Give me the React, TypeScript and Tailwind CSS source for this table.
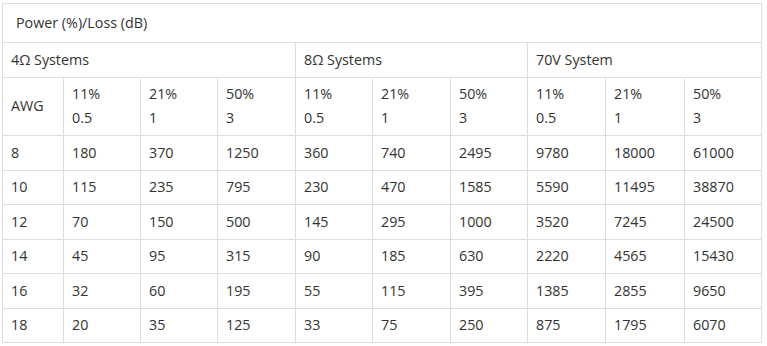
import React from "react";

const rows: string[][] = [
  ["8", "180", "370", "1250", "360", "740", "2495", "9780", "18000", "61000"],
  ["10", "115", "235", "795", "230", "470", "1585", "5590", "11495", "38870"],
  ["12", "70", "150", "500", "145", "295", "1000", "3520", "7245", "24500"],
  ["14", "45", "95", "315", "90", "185", "630", "2220", "4565", "15430"],
  ["16", "32", "60", "195", "55", "115", "395", "1385", "2855", "9650"],
  ["18", "20", "35", "125", "33", "75", "250", "875", "1795", "6070"],
];

const widths = [61, 77, 77, 78, 77, 78, 77, 78, 79, 77];
const sub = [
  ["11%", "0.5"],
  ["21%", "1"],
  ["50%", "3"],
];

const td = "border border-[#dddddd] px-[8px] py-[4.75px] align-middle text-left font-normal";

export default function App() {
  return (
    <div className="min-h-[346px] w-[767px] bg-white pl-[2px] pt-[3px]">
      <table
        className="w-[760px] table-fixed border-collapse text-[14.3px] leading-[24px] text-[#333333]"
        style={{ fontFamily: '"Open Sans", "Noto Sans", sans-serif' }}
      >
        <colgroup>
          {widths.map((w, i) => (
            <col key={i} style={{ width: w }} />
          ))}
        </colgroup>
        <tbody>
          <tr>
            <td colSpan={10} className="border border-[#dddddd] px-[13px] py-[7px]">
              Power (%)/Loss (dB)
            </td>
          </tr>
          <tr>
            <td colSpan={4} className={td}>4Ω Systems</td>
            <td colSpan={3} className={td}>8Ω Systems</td>
            <td colSpan={3} className={td}>70V System</td>
          </tr>
          <tr>
            <td className={td}>AWG</td>
            {[0, 1, 2].flatMap((g) =>
              sub.map(([a, b], i) => (
                <td key={`${g}-${i}`} className={td}>
                  {a}
                  <br />
                  {b}
                </td>
              ))
            )}
          </tr>
          {rows.map((r, ri) => (
            <tr key={ri}>
              {r.map((c, ci) => (
                <td key={ci} className={td}>
                  {c}
                </td>
              ))}
            </tr>
          ))}
        </tbody>
      </table>
    </div>
  );
}
